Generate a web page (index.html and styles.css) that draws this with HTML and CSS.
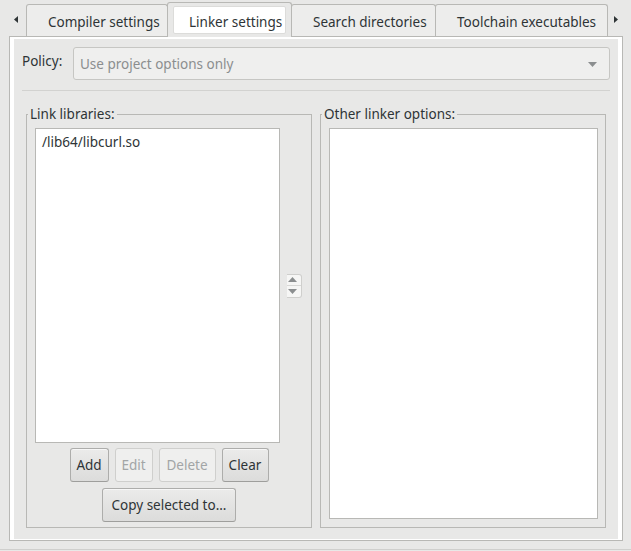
FILE: index.html
```html
<!DOCTYPE html>
<html>
<head>
<meta charset="utf-8">
<link rel="stylesheet" href="styles.css">
</head>
<body>
<div class="tabbar">
  <div class="tab-arrow tab-arrow-left">
    <svg width="4" height="7" viewBox="0 0 4 7"><polygon points="4,0 4,7 0,3.5" fill="#2e3436"/></svg>
  </div>
  <div class="tab tab-compiler"><span>Compiler settings</span></div>
  <div class="tab tab-linker active"><span class="tab-focus">Linker settings</span></div>
  <div class="tab tab-search"><span>Search directories</span></div>
  <div class="tab tab-toolchain"><span>Toolchain executables</span></div>
  <div class="tab-arrow tab-arrow-right">
    <svg width="4" height="7" viewBox="0 0 4 7"><polygon points="0,0 0,7 4,3.5" fill="#2e3436"/></svg>
  </div>
</div>
<div class="notebook">
  <div class="policy-row">
    <span class="policy-label">Policy:</span>
    <div class="combo">
      <span class="combo-text">Use project options only</span>
      <svg class="combo-arrow" width="9" height="5" viewBox="0 0 9 5"><polygon points="0,0 9,0 4.5,5" fill="#8b8e8f"/></svg>
    </div>
  </div>
  <div class="separator"></div>
  <div class="frames">
    <fieldset class="frame frame-libs">
      <legend>Link libraries:</legend>
      <div class="libs-body">
        <div class="list-row">
          <div class="listbox">
            <div class="list-item">/lib64/libcurl.so</div>
          </div>
          <div class="spin">
            <div class="spin-half spin-up">
              <svg width="9" height="5" viewBox="0 0 9 5"><polygon points="0,5 9,5 4.5,0" fill="#8b8e8f"/></svg>
            </div>
            <div class="spin-half spin-down">
              <svg width="9" height="5" viewBox="0 0 9 5"><polygon points="0,0 9,0 4.5,5" fill="#8b8e8f"/></svg>
            </div>
          </div>
        </div>
        <div class="btn-row">
          <button class="btn btn-add">Add</button>
          <button class="btn btn-edit" disabled>Edit</button>
          <button class="btn btn-delete" disabled>Delete</button>
          <button class="btn btn-clear">Clear</button>
        </div>
        <div class="btn-row btn-row-copy">
          <button class="btn btn-copy">Copy selected to...</button>
        </div>
      </div>
    </fieldset>
    <fieldset class="frame frame-other">
      <legend>Other linker options:</legend>
      <div class="textarea"></div>
    </fieldset>
  </div>
</div>
<div class="bottom-line"></div>
</body>
</html>
```

FILE: styles.css
```css
html, body {
  margin: 0;
  padding: 0;
}
body {
  width: 631px;
  height: 551px;
  overflow: hidden;
  background: #e8e8e7;
  font-family: "Noto Sans", "DejaVu Sans", sans-serif;
  font-size: 13.5px;
  color: #2e3436;
}

/* ---------- tabs ---------- */
.tabbar {
  display: flex;
  align-items: flex-end;
  height: 36px;
}
.tab-arrow {
  align-self: stretch;
  display: flex;
  align-items: center;
  padding-top: 2px;
  box-sizing: border-box;
}
.tab-arrow svg { display: block; }
.tab-arrow-left {
  width: 27px;
  padding-left: 14px;
}
.tab-arrow-right {
  padding-left: 6px;
}
.tab {
  box-sizing: border-box;
  height: 32px;
  margin-left: -1px;
  border: 1px solid #b8b8b5;
  border-bottom: none;
  border-radius: 3px 3px 0 0;
  background: #ededec;
  padding-left: 21px;
  line-height: 34px;
  white-space: nowrap;
  overflow: hidden;
}
.tab-compiler { width: 142px; }
.tab-linker { width: 125px; }
.tab-search { width: 145px; }
.tab-toolchain { width: 173px; }
.tab.active {
  position: relative;
  z-index: 1;
  height: 35px;
  margin-bottom: -1px;
  background: #e8e8e7;
  padding: 3px 5px 0 5px;
}
.tab-focus {
  display: block;
  box-sizing: border-box;
  height: 28px;
  border: 1px solid #dcdcda;
  border-radius: 2px;
  background: #ffffff;
  padding-left: 15px;
  line-height: 30px;
}

/* ---------- notebook ---------- */
.notebook {
  box-sizing: border-box;
  margin-left: 9px;
  width: 614px;
  height: 505px;
  border: 1px solid #b8b8b5;
  box-shadow: inset 4px 2px 0 #ffffff, inset -4px -1px 0 #ffffff;
  padding: 10px 12px 0 12px;
}
.policy-row {
  display: flex;
  height: 33px;
}
.policy-label {
  width: 51px;
  flex: none;
  line-height: 18px;
  padding-top: 5px;
}
.combo {
  flex: 1;
  box-sizing: border-box;
  display: flex;
  align-items: center;
  justify-content: space-between;
  border: 1px solid #c6c6c3;
  border-radius: 3px;
  background: #efefee;
  padding: 1px 12px 0 6px;
  color: #8b8e8f;
}
.combo-arrow { display: block; }
.separator {
  margin-top: 10px;
  height: 1px;
  background: #d2d2d0;
}

/* ---------- frames ---------- */
.frames {
  display: flex;
  gap: 8px;
  padding: 0 4px;
  margin-top: 14px;
}
.frame {
  box-sizing: border-box;
  width: 286px;
  height: 423px;
  margin: 0;
  padding: 0;
  border: 1px solid #b8b8b5;
  min-width: 0;
}
.frame legend {
  margin-left: 1px;
  padding: 0 2px;
  line-height: 18px;
}
.libs-body {
  padding: 5px 8px 0 8px;
}
.list-row {
  display: flex;
  align-items: center;
  gap: 7px;
}
.listbox {
  box-sizing: border-box;
  width: 245px;
  height: 315px;
  border: 1px solid #b8b8b5;
  background: #ffffff;
  padding: 4px 6px;
}
.list-item {
  line-height: 18px;
}
.spin {
  box-sizing: border-box;
  width: 15px;
  height: 24px;
  border: 1px solid #cfcfcd;
  border-left: none;
  border-radius: 0 3px 3px 0;
  background: #f6f6f5;
  display: flex;
  flex-direction: column;
}
.spin-half {
  flex: 1;
  display: flex;
  align-items: center;
  padding-left: 1px;
}
.spin-half svg { display: block; }
.spin-up { border-bottom: 1px solid #d8d8d6; }

.btn-row {
  display: flex;
  justify-content: center;
  gap: 6px;
  margin-top: 5px;
}
.btn-row-copy { margin-top: 6px; }
.btn {
  box-sizing: border-box;
  height: 34px;
  padding: 0;
  margin: 0;
  font-family: inherit;
  font-size: 13.5px;
  color: #2e3436;
  border: 1px solid #adadab;
  border-bottom-color: #9e9e9c;
  border-radius: 3px;
  background: linear-gradient(#ebebea, #dcdcdb);
  box-shadow: inset 0 1px 0 #f7f7f7;
}
.btn:disabled {
  background: #efefee;
  border-color: #cfcfcd;
  box-shadow: none;
  color: #a2a5a6;
}
.btn-add { width: 39px; }
.btn-edit { width: 38px; }
.btn-delete { width: 57px; }
.btn-clear { width: 47px; }
.btn-copy { width: 134px; }

.textarea {
  box-sizing: border-box;
  margin: 5px 7px 0 8px;
  height: 391px;
  border: 1px solid #b8b8b5;
  background: #ffffff;
}

.bottom-line {
  margin-top: 8px;
  height: 1px;
  background: #cfcfcd;
}
```
